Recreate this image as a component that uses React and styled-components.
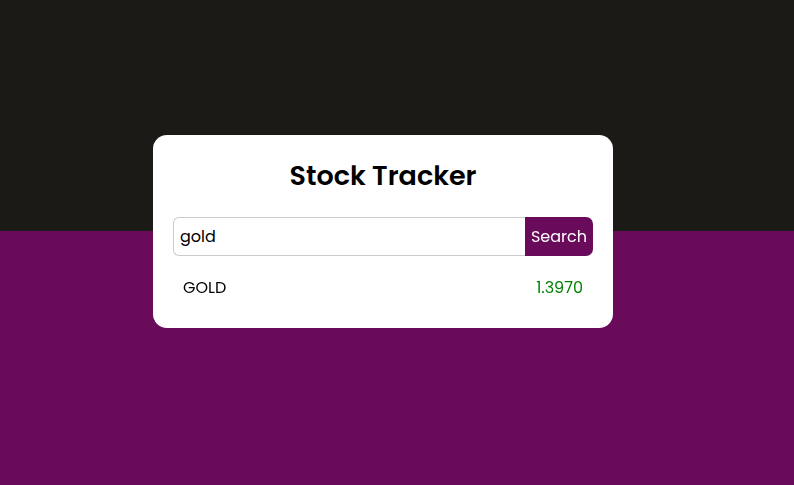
import React, { useEffect, useRef, useState } from "react";
import styled, { createGlobalStyle } from "styled-components";

const GlobalStyle = createGlobalStyle`
  body {
    margin: 0;
    font-family: "Poppins", "Inter", "Noto Sans", sans-serif;
  }
`;

function App() {
  const [query, setQuery] = useState("gold");
  const inputRef = useRef(null);

  useEffect(() => {
    const el = inputRef.current;
    if (el) {
      el.focus();
      el.setSelectionRange(el.value.length, el.value.length);
    }
  }, []);

  return (
    <Page>
      <GlobalStyle />
      <Card>
        <Title>Stock Tracker</Title>
        <SearchBar>
          <SearchInput
            ref={inputRef}
            value={query}
            onChange={(e) => {
              setQuery(e.target.value);
            }}
          />
          <SearchButton>Search</SearchButton>
        </SearchBar>
        <ResultRow>
          <Symbol>GOLD</Symbol>
          <Price up>1.3970</Price>
        </ResultRow>
      </Card>
    </Page>
  );
}

const Page = styled.div`
  min-height: 100vh;
  box-sizing: border-box;
  display: flex;
  justify-content: center;
  align-items: flex-start;
  padding: 135px 28px 0 0;
  background: linear-gradient(#1c1a17 0 231px, #690a5b 231px);
`;
const Card = styled.div`
  width: 460px;
  box-sizing: border-box;
  padding: 20px 20px 30px;
  background-color: #ffffff;
  border-radius: 14px;
`;
const Title = styled.h1`
  margin: 4px 0 24px;
  text-align: center;
  font-size: 27px;
  font-weight: 600;
  line-height: 34px;
  color: #000;
`;
const SearchBar = styled.div`
  display: flex;
  height: 39px;
`;
const SearchInput = styled.input`
  flex: 1;
  min-width: 0;
  box-sizing: border-box;
  padding: 0 6px;
  border: 1px solid #cccccc;
  border-right: none;
  border-radius: 6px 0 0 6px;
  font-family: inherit;
  font-size: 16px;
  color: #000;
  caret-color: #000;
  outline: none;
`;
const SearchButton = styled.button`
  width: 68px;
  border: none;
  border-radius: 0 7px 7px 0;
  background-color: #690a5b;
  color: #ffffff;
  font-family: inherit;
  font-size: 16px;
  padding: 0;
  cursor: pointer;
`;
const ResultRow = styled.div`
  display: flex;
  justify-content: space-between;
  align-items: center;
  padding: 0 10px;
  margin-top: 20px;
  height: 22px;
  font-size: 16px;
`;
const Symbol = styled.span`
  color: #000;
`;
const Price = styled.span`
  color: ${(p) => (p.up ? "#008000" : "#c0141b")};
`;

export default App;
